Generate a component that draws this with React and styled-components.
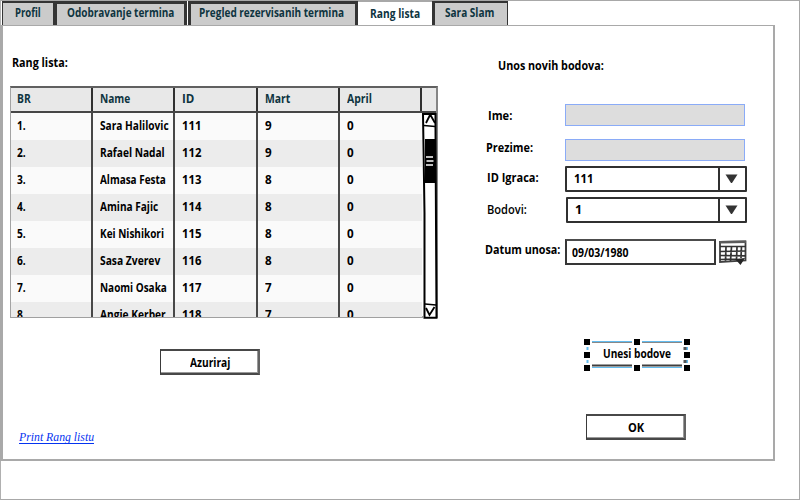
import React, { useLayoutEffect, useRef, useState } from "react";
import styled, { createGlobalStyle } from "styled-components";

const GlobalStyle = createGlobalStyle`
  * { box-sizing: border-box; }
  body { margin: 0; background: #fff; overflow: hidden; }
`;

const Frame = styled.div`
  width: 800px;
  height: 500px;
  border: 1px solid #a8a8a8;
  border-left-color: #b0b0b0;
  display: flex;
  flex-direction: column;
  background: #fff;
  color: #000;
  font-family: "Open Sans", "Noto Sans", sans-serif;
  font-size: 12.5px;
  font-weight: 700;
  line-height: 16px;
`;

const Label = styled.span`
  display: block;
  flex: none;
  width: ${(p) => p.$w}px;
  margin-left: ${(p) => p.$left || 0}px;
  margin-top: ${(p) => p.$top || 0}px;
  height: 16px;
  white-space: nowrap;
  font-weight: ${(p) => p.$weight || "inherit"};
`;

const Glyphs = styled.span`
  display: inline-block;
  transform-origin: 0 50%;
`;

/* Condenses a text so that it takes up exactly `w` pixels. */
function Text({ w, left, top, weight, children }) {
  const ref = useRef(null);
  const [scale, setScale] = useState(0.83);
  useLayoutEffect(() => {
    setScale(w / ref.current.offsetWidth);
  }, [w, children]);
  return (
    <Label $w={w} $left={left} $top={top} $weight={weight}>
      <Glyphs ref={ref} style={{ transform: `scaleX(${scale})` }}>{children}</Glyphs>
    </Label>
  );
}

const TabBar = styled.nav`
  display: flex;
  height: 24px;
  flex: none;
  padding-left: 1px;
  color: #0e3440;
`;

const Tab = styled.div`
  flex: none;
  width: ${(p) => p.$w}px;
  height: ${(p) => (p.$active ? 24 : 25)}px;
  margin-right: ${(p) => p.$gap || 0}px;
  padding: ${(p) => (p.$active ? 5 : 4) - (p.$edge || 2)}px 0 0 ${(p) => p.$pad}px;
  background: ${(p) => (p.$active ? "#fff" : "#cbcbcb")};
  border-style: solid;
  border-color: ${(p) => (p.$active ? "#a8a8a8" : "#343434")};
  border-bottom-color: #a0a0a0;
  border-width: ${(p) => p.$border};
`;

const Panel = styled.main`
  flex: none;
  width: 775px;
  height: 436px;
  margin-left: -1px;
  border: 2px solid #a9a9a9;
  border-left-width: 3px;
  border-top-width: 1px;
  display: flex;
`;

const TableSide = styled.section`
  width: 455px;
  padding: 29px 0 0 7px;
  display: flex;
  flex-direction: column;
`;

const FormSide = styled.section`
  padding-top: 32px;
  display: flex;
  flex-direction: column;
`;

const Table = styled.div`
  position: relative;
  width: 428px;
  height: 232px;
  margin-top: 15px;
  border: 1px solid #a3a3a3;
  border-top: 2px solid #606060;
  border-right: 2px solid #858585;
  border-bottom: 2px solid #a0a0a0;
`;

const HeadRow = styled.div`
  display: grid;
  grid-template-columns: 82px 82px 83px 82px 82px 14px;
  height: 25px;
  background: #e8e8e8;
  border-bottom: 2px solid #464646;
  color: #0e3440;
`;

const HeadCell = styled.div`
  border-right: ${(p) => (p.$last ? 0 : 2)}px solid #303030;
  padding: 3px 0 0 ${(p) => (p.$first ? 6 : 7)}px;
`;

const TableBody = styled.div`
  height: 204px;
  overflow: hidden;
`;

const Rows = styled.div`
  width: 411px;
`;

const Row = styled.div`
  display: grid;
  grid-template-columns: 82px 82px 83px 82px 82px;
  height: 27px;
  background: ${(p) => (p.$even ? "#ececec" : "#fafafa")};
`;

const Cell = styled.div`
  padding: 5px 0 0 ${(p) => (p.$first ? 6 : 7)}px;
  border-right: ${(p) => (p.$last ? 0 : 2)}px solid #484848;
`;

const ScrollBar = styled.svg`
  position: absolute;
  left: 411px;
  top: 25px;
`;

const Button = styled.button`
  width: 100px;
  height: 26px;
  margin: ${(p) => p.$margin};
  padding: 1px 0 0;
  display: flex;
  justify-content: center;
  align-items: center;
  font: inherit;
  color: #000;
  background: #fff;
  border: 1.5px solid #3a3a3a;
  border-top: 2px solid #484848;
  border-right: 2px solid #626262;
  border-bottom: 2px solid #484848;
  box-shadow: inset -1px -1px 0 #9a9a9a;
`;

const Link = styled.a`
  width: 75px;
  height: 15px;
  margin: 54px 0 0 9px;
  font: italic 400 13px/15px "Liberation Serif", serif;
  color: #0433f0;
  white-space: nowrap;
  border-bottom: 1px solid #0433f0;
`;

const Field = styled.div`
  display: flex;
  height: ${(p) => p.$h}px;
  margin-top: ${(p) => p.$gap}px;
`;

const LabelBox = styled.div`
  flex: none;
  width: ${(p) => p.$w}px;
`;

const DisabledInput = styled.div`
  width: 180px;
  height: 22px;
  background: #ddd;
  border: 1px solid #8aabf7;
`;

const Select = styled.div`
  display: flex;
  width: ${(p) => p.$w}px;
  height: 26px;
  background: #fff;
  border: 2px solid #303030;
  border-radius: 1px;
`;

const SelectValue = styled.div`
  flex: 1;
  padding: 3px 0 0 7px;
`;

const Arrow = styled.div`
  width: 27px;
  border-left: 2px solid #303030;
  padding: 6px 0 0 5px;
  line-height: 0;
`;

const DateInput = styled.div`
  width: 151px;
  height: 26px;
  padding: 4px 0 0 5px;
  border: 2px solid #363636;
  border-top-color: #4c4c4c;
  margin-right: 3px;
`;

const Selected = styled.div`
  position: relative;
  width: 100px;
  height: 26px;
  margin: 77px 0 0 129px;
  padding: 4px 0 0 16px;
`;

const SelectionMarks = styled.svg`
  position: absolute;
  left: -3px;
  top: -3px;
`;

const headers = [["BR", 14], ["Name", 30], ["ID", 12], ["Mart", 25], ["April", 25]];

const players = [
  ["Sara Halilovic", 69, "111", "9"],
  ["Rafael Nadal", 65, "112", "9"],
  ["Almasa Festa", 66, "113", "8"],
  ["Amina Fajic", 58, "114", "8"],
  ["Kei Nishikori", 64, "115", "8"],
  ["Sasa Zverev", 60, "116", "8"],
  ["Naomi Osaka", 67, "117", "7"],
  ["Angie Kerber", 66, "118", "7"],
];

const handles = [[0, 0], [50, 0], [100, 0], [0, 13], [100, 13], [0, 26], [50, 26], [100, 26]];

function DownArrow() {
  return (
    <Arrow>
      <svg width="14" height="10" viewBox="0 0 14 10">
        <path d="M0.500 0.500L12.500 0.500L7 9L6 9Z" fill="#333" />
      </svg>
    </Arrow>
  );
}

function Calendar() {
  return (
    <svg width="28" height="27" viewBox="0 0 28 27">
      <path d="M1 3L26.500 2.500V21.500L1 23Z" fill="#fff" stroke="#404040" strokeWidth="1.8" />
      <path d="M1 3.300L27 2.800" stroke="#5b5b5b" strokeWidth="2.5" />
      <path d="M1 7.500H27M1 12.500L27 12M1 16.500L27 16.800M1 20.500L18 20M7 8L6.500 22M12.500 8L11.500 22M18 8L17.500 21M22.500 7L22 19" stroke="#333" strokeWidth="1.7" fill="none" />
      <path d="M16 20L26 19L21.500 26Z" fill="#252525" />
    </svg>
  );
}

export default function App() {
  return (
    <>
      <GlobalStyle />
      <Frame>
        <TabBar>
          <Tab $w={52} $pad={12} $border="2px 1px 1px 1px"><Text w={26}>Profil</Text></Tab>
          <Tab $w={133} $gap={1} $pad={10} $border="3px 3px 1px 3px" $edge={3}><Text w={107}>Odobravanje termina</Text></Tab>
          <Tab $w={170} $pad={8} $border="3px 3px 1px 3px" $edge={3}><Text w={145}>Pregled rezervisanih termina</Text></Tab>
          <Tab $w={74} $pad={12} $active $border="1px 0 0 0" $edge={1}><Text w={50}>Rang lista</Text></Tab>
          <Tab $w={76} $pad={10} $border="2px 1px 1px 3px"><Text w={49}>Sara Slam</Text></Tab>
        </TabBar>
        <Panel>
          <TableSide>
            <Text w={56} left={2}>Rang lista:</Text>
            <Table>
              <HeadRow>
                {headers.map(([name, w], i) => (
                  <HeadCell key={name} $first={i === 0}><Text w={w}>{name}</Text></HeadCell>
                ))}
                <HeadCell $last />
              </HeadRow>
              <TableBody>
                <Rows>
                  {players.map(([name, w, id, mart], i) => (
                    <Row key={id} $even={i % 2 === 1}>
                      <Cell $first><Text w={9}>{i + 1 + "."}</Text></Cell>
                      <Cell><Text w={w}>{name}</Text></Cell>
                      <Cell><Text w={19}>{id}</Text></Cell>
                      <Cell><Text w={6.5}>{mart}</Text></Cell>
                      <Cell $last><Text w={6.5}>0</Text></Cell>
                    </Row>
                  ))}
                </Rows>
              </TableBody>
              <ScrollBar width="16" height="206" viewBox="0 0 16 206">
                <path d="M0 0H14V206H1Z" fill="#fafafa" />
                <path d="M1 1L13.500 1L13.500 14L14.500 204.800L2.500 204.800L2.500 100Z" fill="#fff" stroke="#000" strokeWidth="2" />
                <path d="M2 12.500L13 13.500M3 191L14 192" stroke="#000" strokeWidth="1.500" />
                <path d="M4 10L7.500 3L9 3L13 10M4 195L7.500 202L12.500 194" stroke="#000" strokeWidth="1.800" fill="none" />
                <path d="M3 26H14V70H3Z" />
                <path d="M4 44H11M4.500 48H11.500M4 52H11" stroke="#fff" strokeWidth="1.500" />
              </ScrollBar>
            </Table>
            <Button $margin="31px 0 0 150px"><Text w={40}>Azuriraj</Text></Button>
            <Link href="#"><Text w={75}>Print Rang listu</Text></Link>
          </TableSide>
          <FormSide>
            <Text w={106} left={40}>Unos novih bodova:</Text>
            <Field $h={22} $gap={30}>
              <LabelBox $w={107}><Text w={24} left={30} top={4}>Ime:</Text></LabelBox>
              <DisabledInput />
            </Field>
            <Field $h={22} $gap={13}>
              <LabelBox $w={107}><Text w={47} left={28} top={1}>Prezime:</Text></LabelBox>
              <DisabledInput />
            </Field>
            <Field $h={26} $gap={5}>
              <LabelBox $w={107}><Text w={52} left={29} top={4}>ID Igraca:</Text></LabelBox>
              <Select $w={182}><SelectValue><Text w={19}>111</Text></SelectValue><DownArrow /></Select>
            </Field>
            <Field $h={26} $gap={5}>
              <LabelBox $w={108}><Text w={40} left={29} top={5} weight={600}>Bodovi:</Text></LabelBox>
              <Select $w={181}><SelectValue><Text w={7}>1</Text></SelectValue><DownArrow /></Select>
            </Field>
            <Field $h={26} $gap={16}>
              <LabelBox $w={107}><Text w={75} left={27} top={3}>Datum unosa:</Text></LabelBox>
              <DateInput><Text w={57}>09/03/1980</Text></DateInput>
              <Calendar />
            </Field>
            <Selected>
              <Text w={68}>Unesi bodove</Text>
              <SelectionMarks width="106" height="32" viewBox="0 0 106 32">
                <path d="M8 2.500H48M58 2.500H98M8 28.500H48M58 28.500H98" stroke="#62bcef" />
                <path d="M8 3.500H48M58 3.500H98" stroke="#888" />
                <path d="M8 26.500H48M58 26.500H98" stroke="#3f3f3f" strokeWidth="2" />
                <path d="M3.500 8V11M3.500 21V24M103 8V11M103 21V24" stroke="#62bcef" strokeWidth="2" />
                <path d="M101 8V11M101 21V24" stroke="#555" strokeWidth="3" />
                {handles.map(([x, y]) => (
                  <rect key={`${x}-${y}`} x={x} y={y} width="6" height="6" />
                ))}
              </SelectionMarks>
            </Selected>
            <Button $margin="46px 0 0 128px"><Text w={16}>OK</Text></Button>
          </FormSide>
        </Panel>
      </Frame>
    </>
  );
}
